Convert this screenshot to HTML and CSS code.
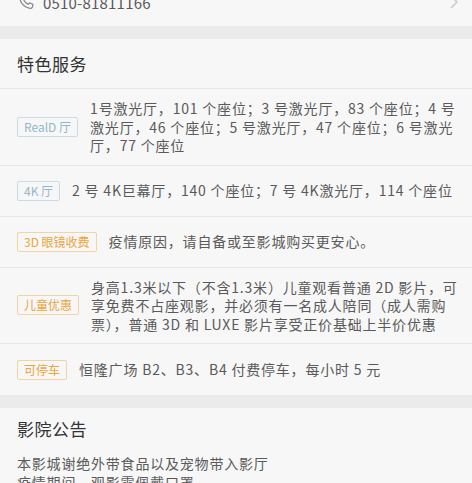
FILE: index.html
```html
<!DOCTYPE html>
<html lang="zh-CN">
<head>
  <meta charset="UTF-8" />
  <meta name="viewport" content="width=device-width, initial-scale=1.0"/>
  <title>影院详情</title>
  <link rel="stylesheet" href="styles.css">
</head>
<body>

  <div class="page">
    <div class="phone-row">
      <svg class="phone-icon" viewBox="0 0 20 20" width="18" height="18">
        <path d="M5.2 2.5 L7.6 2.2 L9 6 L7.4 7.4 C8.3 9.6 10.2 11.6 12.5 12.7 L14 11 L17.7 12.5 L17.4 14.9 C17.2 16.3 15.8 17.3 14.4 17 C8.6 15.8 4 11.3 2.9 5.4 C2.7 4 3.7 2.7 5.2 2.5 Z"
              fill="none" stroke="#8a8a8a" stroke-width="1.4" stroke-linejoin="round"/>
      </svg>
      <span class="phone">0510-81811166</span>
      <svg class="chevron" viewBox="0 0 8 14" width="8" height="14">
        <path d="M1 1 L7 7 L1 13" fill="none" stroke="#c8c8c8" stroke-width="1.5"/>
      </svg>
    </div>

    <div class="section">
      <div class="section-title with-line">特色服务</div>

      <div class="service">
        <span class="tag blue">RealD 厅</span>
        <div class="desc">1号激光厅，101 个座位；3 号激光厅，83 个座位；4 号<br>激光厅，46 个座位；5 号激光厅，47 个座位；6 号激光<br>厅，77 个座位</div>
      </div>

      <div class="service">
        <span class="tag blue">4K 厅</span>
        <div class="desc">2 号 4K巨幕厅，140 个座位；7 号 4K激光厅，114 个座位</div>
      </div>

      <div class="service">
        <span class="tag orange">3D 眼镜收费</span>
        <div class="desc">疫情原因，请自备或至影城购买更安心。</div>
      </div>

      <div class="service">
        <span class="tag orange">儿童优惠</span>
        <div class="desc">身高1.3米以下（不含1.3米）儿童观看普通 2D 影片，可<br>享免费不占座观影，并必须有一名成人陪同（成人需购<br>票），普通 3D 和 LUXE 影片享受正价基础上半价优惠</div>
      </div>

      <div class="service last">
        <span class="tag orange">可停车</span>
        <div class="desc">恒隆广场 B2、B3、B4 付费停车，每小时 5 元</div>
      </div>
    </div>

    <div class="section">
      <div class="section-title short">影院公告</div>
      <div class="notice">
        本影城谢绝外带食品以及宠物带入影厅<br>
        疫情期间，观影需佩戴口罩
      </div>
    </div>
  </div>

</body>
</html>
```

FILE: styles.css
```css
/* Общие стили страницы */
body {
  margin: 0;
  padding: 0;
  font-family: "Noto Sans CJK SC", "Noto Sans", sans-serif;
  background-color: #ebebeb;
  color: #5a5a5a;
}

.page {
  margin-top: -22px;
}

/* Строка с телефоном */
.phone-row {
  display: flex;
  align-items: center;
  height: 48px;
  padding: 0 14px 0 17px;
  background-color: #f7f7f7;
  margin-bottom: 13px;
}

.phone-icon {
  margin-right: 8px;
}

.phone {
  flex: 1;
  font-size: 15px;
  letter-spacing: 0.2px;
  color: #5a5a5a;
}

/* Секции */
.section {
  background-color: #f7f7f7;
  margin-bottom: 13px;
}

.section-title {
  font-size: 17px;
  letter-spacing: 0.5px;
  color: #333;
  padding: 0 17px;
  height: 49px;
  line-height: 49px;
}

.section-title.with-line {
  border-bottom: 1px solid #e6e6e6;
}

.section-title.short {
  height: 42px;
  line-height: 42px;
}

.service {
  display: flex;
  align-items: center;
  gap: 12px;
  min-height: 51px;
  box-sizing: border-box;
  padding: 10px 2px 10px 17px;
  border-bottom: 1px solid #e6e6e6;
}

.service.last {
  border-bottom: none;
}

.tag {
  flex-shrink: 0;
  font-size: 12px;
  line-height: 18px;
  padding: 0 6px;
  border: 1px solid;
  border-radius: 2px;
  white-space: nowrap;
}

.tag.blue {
  color: #93b7ca;
  border-color: #c8dce6;
}

.tag.orange {
  color: #eaa53c;
  border-color: #f0d5a0;
}

.desc {
  flex: 1;
  font-size: 14px;
  line-height: 18.5px;
  letter-spacing: 0.8px;
  color: #5a5a5a;
}

.notice {
  padding: 4px 17px 10px;
  font-size: 14px;
  line-height: 19px;
  letter-spacing: 0.8px;
  color: #5a5a5a;
}
```
